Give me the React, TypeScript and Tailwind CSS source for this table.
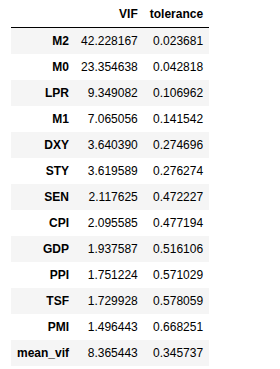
const rows: [string, string, string][] = [
  ["M2", "42.228167", "0.023681"],
  ["M0", "23.354638", "0.042818"],
  ["LPR", "9.349082", "0.106962"],
  ["M1", "7.065056", "0.141542"],
  ["DXY", "3.640390", "0.274696"],
  ["STY", "3.619589", "0.276274"],
  ["SEN", "2.117625", "0.472227"],
  ["CPI", "2.095585", "0.477194"],
  ["GDP", "1.937587", "0.516106"],
  ["PPI", "1.751224", "0.571029"],
  ["TSF", "1.729928", "0.578059"],
  ["PMI", "1.496443", "0.668251"],
  ["mean_vif", "8.365443", "0.345737"],
];

export default function App() {
  return (
    <div className="w-[280px] h-[369px] bg-white pl-[11px] pt-px font-['Liberation_Sans',Arial,sans-serif] text-[12px] text-black">
      <table className="border-collapse">
        <thead>
          <tr className="border-b border-black">
            <th className="px-[6px] py-[6px] leading-[14px]"></th>
            <th className="px-[6px] py-[6px] leading-[14px] text-right font-bold">VIF</th>
            <th className="px-[6px] py-[6px] leading-[14px] text-right font-bold">tolerance</th>
          </tr>
        </thead>
        <tbody>
          {rows.map(([name, vif, tol], i) => (
            <tr key={name} className={i % 2 === 0 ? "bg-[#f5f5f5]" : "bg-white"}>
              <th className="px-[6px] py-[6px] leading-[14px] text-right font-bold">{name}</th>
              <td className="px-[6px] py-[6px] leading-[14px] text-right">{vif}</td>
              <td className="px-[6px] py-[6px] leading-[14px] text-right">{tol}</td>
            </tr>
          ))}
        </tbody>
      </table>
    </div>
  );
}
